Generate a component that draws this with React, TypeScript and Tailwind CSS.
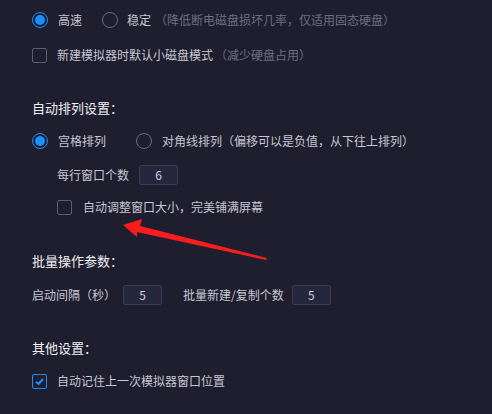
import React from 'react';

const Radio = ({ checked }: { checked?: boolean }) =>
  checked ? (
    <span className="flex h-[16px] w-[16px] shrink-0 items-center justify-center rounded-full border-[1.5px] border-[#1890ff]">
      <span className="h-[10px] w-[10px] rounded-full bg-[#1890ff]" />
    </span>
  ) : (
    <span className="block h-[16px] w-[16px] shrink-0 rounded-full border border-[#6a6b78]" />
  );

const Checkbox = ({ checked }: { checked?: boolean }) =>
  checked ? (
    <span className="flex h-[15px] w-[15px] shrink-0 items-center justify-center rounded-[2px] border border-[#1890ff]">
      <svg width="11" height="11" viewBox="0 0 11 11">
        <path d="M2 5.6 L4.5 8 L9 3" fill="none" stroke="#1890ff" strokeWidth="2" />
      </svg>
    </span>
  ) : (
    <span className="block h-[15px] w-[15px] shrink-0 rounded-[2px] border border-[#5e5f6e]" />
  );

const NumBox = ({ value }: { value: string }) => (
  <span className="flex h-[20px] w-[39px] shrink-0 items-center justify-center rounded-[2px] border border-[#3a3c52] bg-[#25273d] text-[12px] text-[#d2d2dc]">
    {value}
  </span>
);

const Title = ({ children, className }: { children: React.ReactNode; className: string }) => (
  <div className={`flex h-[20px] items-center text-[13px] text-[#f0f0f6] ${className}`}>{children}</div>
);

export default function App() {
  return (
    <div
      className="relative flex h-[414px] w-[492px] flex-col overflow-hidden bg-[#1e1e2e] pl-[32px] pt-[10px] text-[12px] leading-none text-[#c6c7d2]"
      style={{ fontFamily: '"Noto Sans CJK SC", "Noto Sans", sans-serif' }}
    >
      <div className="flex h-[20px] items-center">
        <Radio checked />
        <span className="ml-[10px]">高速</span>
        <span className="ml-[20px] flex"><Radio /></span>
        <span className="ml-[9px]">稳定</span>
        <span className="ml-[4px] text-[#6c6e82]">（降低断电磁盘损坏几率，仅适用固态硬盘）</span>
      </div>

      <div className="mt-[15px] flex h-[20px] items-center">
        <Checkbox />
        <span className="ml-[10px]">新建模拟器时默认小磁盘模式</span>
        <span className="ml-[2px] text-[#6c6e82]">（减少硬盘占用）</span>
      </div>

      <Title className="mt-[32px]">自动排列设置：</Title>

      <div className="mt-[14px] flex h-[20px] items-center">
        <Radio checked />
        <span className="ml-[10px]">宫格排列</span>
        <span className="ml-[30px] flex"><Radio /></span>
        <span className="ml-[10px]">对角线排列（偏移可以是负值，从下往上排列）</span>
      </div>

      <div className="mt-[14px] flex h-[20px] items-center pl-[25px]">
        <span>每行窗口个数</span>
        <span className="ml-[10px] flex"><NumBox value="6" /></span>
      </div>

      <div className="mt-[12px] flex h-[20px] items-center pl-[25px]">
        <Checkbox />
        <span className="ml-[11px]">自动调整窗口大小，完美铺满屏幕</span>
      </div>

      <Title className="mt-[33px]">批量操作参数：</Title>

      <div className="mt-[15px] flex h-[20px] items-center">
        <span>启动间隔（秒）</span>
        <span className="ml-[7px] flex"><NumBox value="5" /></span>
        <span className="ml-[21px]">批量新建/复制个数</span>
        <span className="ml-[8px] flex"><NumBox value="5" /></span>
      </div>

      <Title className="mt-[32px]">其他设置：</Title>

      <div className="mt-[14px] flex h-[20px] items-center">
        <Checkbox checked />
        <span className="ml-[10px]">自动记住上一次模拟器窗口位置</span>
      </div>

      <svg className="pointer-events-none absolute left-0 top-0" width="492" height="414">
        <polygon
          points="123,225 142,219 140,226 267,258 266,260 137,232 137,237"
          fill="#fb1d1d"
        />
      </svg>
    </div>
  );
}
